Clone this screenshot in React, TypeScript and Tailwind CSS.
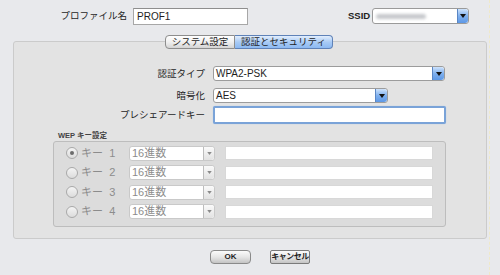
import React from "react";

const font = { fontFamily: '"Liberation Sans", "Noto Sans CJK JP", sans-serif' };

function BlueArrow({ w = 12 }: { w?: number }) {
  return (
    <div className="h-full flex items-center justify-center border-l border-[#5a86c4] rounded-r-[3px] bg-gradient-to-b from-[#cfe3fb] via-[#7fb0ee] to-[#5d98e6]" style={{ width: w }}>
      <svg width="6" height="4" viewBox="0 0 6 4"><path d="M0 0 L6 0 L3 4 Z" fill="#111" /></svg>
    </div>
  );
}

function GrayArrow() {
  return (
    <div className="h-full w-[11px] flex items-center justify-center border-l border-[#bdbdbd] rounded-r-[3px] bg-gradient-to-b from-[#fafafa] to-[#e2e2e2]">
      <svg width="5" height="3" viewBox="0 0 6 4"><path d="M0 0 L6 0 L3 4 Z" fill="#8a8a8a" /></svg>
    </div>
  );
}

function KeyRow({ n, checked }: { n: number; checked?: boolean }) {
  return (
    <div className="flex items-center h-[15px]">
      <div className="ml-[12px] w-[12px] h-[12px] rounded-full border border-[#a9a9a9] bg-gradient-to-b from-[#f4f4f4] to-[#dcdcdc] flex items-center justify-center">
        {checked && <div className="w-[4px] h-[4px] rounded-full bg-[#6c6c6c]" />}
      </div>
      <span className="ml-[3px] w-[47px] text-[11px] text-[#8c8c8c] leading-none whitespace-pre">キー  {n}</span>
      <div className="ml-[1px] w-[86px] h-full flex border border-[#c9c9c9] bg-white rounded-[3px]">
        <span className="flex-1 pl-[2px] text-[11px] leading-[13px] text-[#8c8c8c]">16進数</span>
        <GrayArrow />
      </div>
      <div className="ml-[10px] w-[208px] h-[14px] bg-white border border-[#d8d8d8]" />
    </div>
  );
}

export default function App() {
  return (
    <div className="w-[500px] h-[275px] bg-[#e8e9ec] relative overflow-hidden text-[#1e1e1e]" style={font}>
      {/* top row */}
      <div className="flex items-center pt-[7px] h-[25px]">
        <span className="w-[127px] text-right text-[9.5px] leading-none whitespace-nowrap">プロファイル名</span>
        <div className="ml-[6px] w-[115px] h-[17px] bg-white border border-[#a7a7a7] border-t-[#8e8e8e] flex items-center pl-[3px] text-[10px]">PROF1</div>
        <span className="ml-[100px] w-[20px] text-[9.5px] font-semibold leading-none text-[#222]">SSID</span>
        <div className="ml-[4px] w-[97px] h-[16px] bg-white border border-[#9a9a9a] rounded-[3px] flex">
          <div className="flex-1 flex items-center pl-[3px]">
            <div className="w-[50px] h-[5px] rounded-full bg-[#c6c8cc] blur-[1.5px]" />
          </div>
          <BlueArrow w={11} />
        </div>
      </div>

      {/* panel */}
      <div className="ml-[13px] mt-[16px] w-[474px] h-[198px] bg-[#e3e3e3] border border-[#cbcbcb] rounded-[3px] flex flex-col">
        {/* tabs */}
        <div className="flex justify-center -mt-[7px] -ml-[2px] h-[14px]">
          <div className="w-[70px] h-full flex items-center justify-center text-[9.5px] border border-[#8d8d8d] rounded-l-[4px] bg-gradient-to-b from-[#ffffff] via-[#f0f0f0] to-[#d4d4d4]">システム設定</div>
          <div className="w-[98px] h-full flex items-center justify-center text-[9.5px] border border-l-0 border-[#5f82b8] rounded-r-[4px] bg-gradient-to-b from-[#e2eefd] via-[#a9cbf5] to-[#8cb9f2]">認証とセキュリティ</div>
        </div>

        {/* form rows */}
        <div className="flex items-center mt-[17px] h-[15px]">
          <span className="w-[191px] text-right text-[9.5px] leading-none">認証タイプ</span>
          <div className="ml-[8px] w-[232px] h-full bg-white border border-[#9c9c9c] rounded-[3px] flex">
            <span className="flex-1 pl-[2px] text-[10px] leading-[13px]">WPA2-PSK</span>
            <BlueArrow />
          </div>
        </div>
        <div className="flex items-center mt-[7px] h-[15px]">
          <span className="w-[191px] text-right text-[9.5px] leading-none">暗号化</span>
          <div className="ml-[8px] w-[175px] h-full bg-white border border-[#9c9c9c] rounded-[3px] flex">
            <span className="flex-1 pl-[2px] text-[10px] leading-[13px]">AES</span>
            <BlueArrow />
          </div>
        </div>
        <div className="flex items-center mt-[3px] h-[18px]">
          <span className="w-[191px] text-right text-[9.5px] leading-none">プレシェアードキー</span>
          <div className="ml-[8px] w-[233px] h-full bg-white border-2 border-[#7aa3d8] rounded-[2px] shadow-[0_0_1px_#9cc0ec]" />
        </div>

        {/* WEP group */}
        <span className="ml-[44px] mt-[8px] text-[7.5px] font-bold leading-none text-[#444]">WEP キー設定</span>
        <div className="ml-[39px] mt-[1px] w-[393px] h-[86px] bg-[#dcdcdc] border border-[#bdbdbd] rounded-[3px] flex flex-col gap-[4.5px] pt-[4px]">
          <KeyRow n={1} checked />
          <KeyRow n={2} />
          <KeyRow n={3} />
          <KeyRow n={4} />
        </div>
      </div>

      {/* right edge strip */}
      <div className="absolute right-[10px] top-[0px] h-full w-px border-l border-dashed border-[#efe9c8]" />

      {/* buttons */}
      <div className="flex mt-[11px] h-[14px]">
        <div className="ml-[210px] w-[41px] h-full rounded-[4px] border border-[#8a8a8a] bg-gradient-to-b from-[#fbfbfb] via-[#e6e6e6] to-[#c4c4c4] flex items-center justify-center text-[8px] font-bold">OK</div>
        <div className="ml-[19px] w-[40px] h-full rounded-[2px] border border-[#7a7a7a] bg-gradient-to-b from-[#fbfbfb] via-[#e6e6e6] to-[#c4c4c4] flex items-center justify-center text-[8px] font-bold tracking-[-0.5px] whitespace-nowrap overflow-hidden">キャンセル</div>
      </div>
    </div>
  );
}
